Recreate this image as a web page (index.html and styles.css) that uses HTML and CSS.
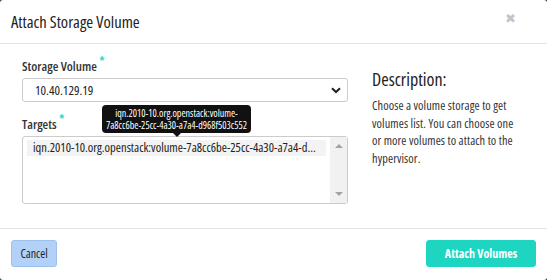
FILE: index.html
```html
<!DOCTYPE html>
<html>
<head>
<meta charset="utf-8">
<link rel="stylesheet" href="styles.css">
</head>
<body>
<div class="modal">
  <div class="modal-header">
    <h3 class="title">Attach Storage Volume</h3>
    <span class="close">&#10006;</span>
  </div>
  <div class="modal-body">
    <div class="form-col">
      <label class="lbl">Storage Volume <span class="req">*</span></label>
      <div class="select">
        <span>10.40.129.19</span>
        <svg class="chev" width="10" height="7" viewBox="0 0 10 7"><path d="M1 1.2 L5 5 L9 1.2" fill="none" stroke="#222" stroke-width="2"/></svg>
      </div>
      <div class="targets-row">
        <label class="lbl">Targets <span class="req">*</span></label>
        <div class="tooltip">iqn.2010-10.org.openstack:volume-<br>7a8cc6be-25cc-4a30-a7a4-d968f503c552<span class="arrow"></span></div>
      </div>
      <div class="multi">
        <div class="options">
          <div class="opt">iqn.2010-10.org.openstack:volume-7a8cc6be-25cc-4a30-a7a4-d...</div>
        </div>
        <div class="scroll">
          <span class="up"></span>
          <span class="down"></span>
        </div>
      </div>
    </div>
    <div class="desc-col">
      <h4 class="desc-title">Description:</h4>
      <p class="desc">Choose a volume storage to get volumes list. You can choose one or more volumes to attach to the hypervisor.</p>
    </div>
  </div>
  <div class="modal-footer">
    <button class="btn cancel">Cancel</button>
    <button class="btn primary">Attach Volumes</button>
  </div>
</div>
</body>
</html>
```
FILE: styles.css
```css
html { background: #1f3b3b; }
body {
  margin: 0;
  font-family: "Open Sans", sans-serif;
  font-stretch: 75%;
  color: #222;
}
.modal {
  width: 547px;
  height: 280px;
  background: #fff;
  border-radius: 3px;
  display: flex;
  flex-direction: column;
}
.modal-header {
  height: 44px;
  border-bottom: 1px solid #e5e5e5;
  display: flex;
  align-items: center;
  justify-content: space-between;
  padding: 0 31px 0 11px;
  box-sizing: border-box;
}
.title {
  margin: 0;
  font-size: 16.6px;
  font-weight: normal;
  color: #222;
}
.close {
  color: #c4c4c4;
  font-size: 13px;
  margin-top: -6px;
  font-family: "DejaVu Sans", sans-serif;
  font-stretch: normal;
}
.modal-body {
  flex: 1;
  display: flex;
  padding: 13px 22px 0 22px;
  border-bottom: 1px solid #e5e5e5;
}
.form-col {
  width: 326px;
  flex-shrink: 0;
}
.lbl {
  display: block;
  font-size: 13px;
  font-weight: 600;
  color: #333;
  height: 21px;
  line-height: 18px;
}
.req {
  color: #1dd4c0;
  font-size: 13px;
  vertical-align: top;
  position: relative;
  top: -5px;
}
.select {
  height: 24px;
  border: 1px solid #ccc;
  border-radius: 3px;
  box-sizing: border-box;
  display: flex;
  align-items: center;
  justify-content: space-between;
  padding: 0 6px 0 12px;
  font-size: 13px;
}
.targets-row {
  position: relative;
  margin-top: 13px;
}
.tooltip {
  position: absolute;
  left: 80px;
  top: -10px;
  width: 149px;
  height: 28px;
  background: #111;
  color: #fff;
  border-radius: 4px;
  font-size: 10px;
  line-height: 12px;
  text-align: center;
  padding-top: 2px;
  box-sizing: border-box;
  white-space: nowrap;
}
.arrow {
  position: absolute;
  left: 71px;
  bottom: -4px;
  border-left: 4px solid transparent;
  border-right: 4px solid transparent;
  border-top: 4px solid #111;
}
.multi {
  height: 68px;
  border: 1px solid #ccc;
  border-radius: 3px;
  box-sizing: border-box;
  display: flex;
}
.options {
  flex: 1;
  min-width: 0;
  padding: 3px 4px;
}
.opt {
  background: #f3f3f3;
  font-size: 12.5px;
  line-height: 16px;
  padding: 0 2px 0 6px;
  white-space: nowrap;
  overflow: hidden;
}
.scroll {
  width: 17px;
  background: #f1f1f1;
  display: flex;
  flex-direction: column;
  justify-content: space-between;
  align-items: center;
  padding: 7px 0;
  box-sizing: border-box;
}
.up {
  border-left: 4px solid transparent;
  border-right: 4px solid transparent;
  border-bottom: 4px solid #a3a3a3;
}
.down {
  border-left: 4px solid transparent;
  border-right: 4px solid transparent;
  border-top: 4px solid #a3a3a3;
}
.desc-col {
  margin-left: 24px;
  width: 148px;
  flex-shrink: 0;
}
.desc-title {
  margin: 10px 0 6px;
  font-size: 18px;
  font-weight: normal;
  color: #222;
}
.desc {
  margin: 0;
  font-size: 12.3px;
  letter-spacing: 0.1px;
  line-height: 17.5px;
  color: #333;
}
.modal-footer {
  height: 51px;
  display: flex;
  justify-content: space-between;
  align-items: flex-start;
  padding: 11px 11px 0;
  box-sizing: border-box;
}
.btn {
  height: 27px;
  border-radius: 3px;
  font-family: inherit;
  font-stretch: 75%;
  font-size: 12px;
  padding: 0 8px;
  white-space: nowrap;
  cursor: pointer;
}
.cancel {
  background: #b3d1f6;
  border: 1px solid #9cc1ee;
  color: #222;
  width: 46px;
}
.primary {
  background: #1dd5c1;
  border: 1px solid #1dd5c1;
  color: #fff;
  font-weight: 700;
  width: 110px;
}
```
